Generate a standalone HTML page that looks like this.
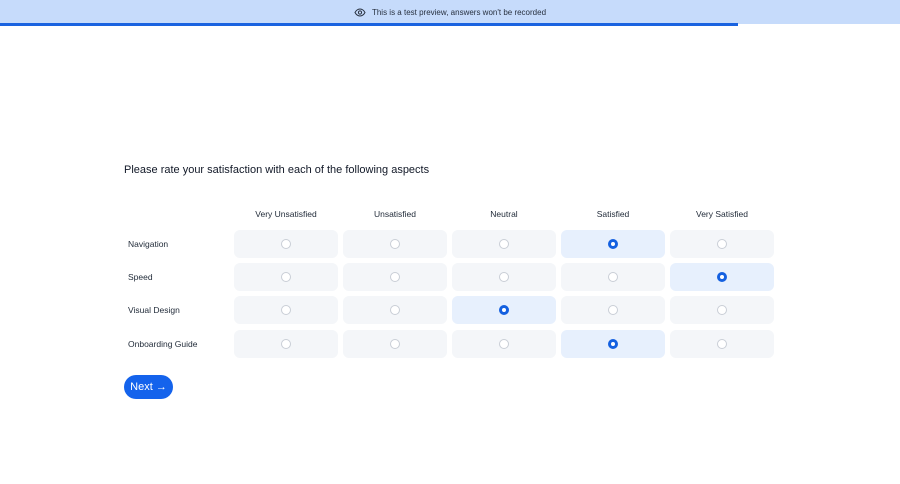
<!DOCTYPE html>
<html><head><style>
*{margin:0;padding:0;box-sizing:border-box}
body{width:900px;height:484px;background:#fff;font-family:"Liberation Sans",sans-serif;color:#1a1f2e;position:relative;overflow:hidden}
.ban{position:absolute;top:0;left:0;width:900px;height:24px;background:#c6dbfb;font-size:8px;color:#27303f;display:flex;align-items:center;justify-content:center;gap:6px}
.bar{position:absolute;top:23px;left:0;width:738px;height:3px;background:#1a63e0}
.q{position:absolute;left:124px;top:164px;font-size:11px;color:#111827}
.h{position:absolute;top:209px;font-size:8.5px;color:#1f2937;width:104px;text-align:center}
.l{position:absolute;left:128px;font-size:8.5px;color:#1f2937}
.c{position:absolute;width:104px;height:28px;background:#f4f6f9;border-radius:6px}
.c.s{background:#e7f0fd}
.r{position:absolute;left:47px;top:9px;width:10px;height:10px;border:1px solid #c9ced6;border-radius:50%;background:#fff}
.s .r{border:3px solid #1460e0;background:#fff}
.btn{position:absolute;left:124px;top:375px;width:49px;height:24px;background:#1463ec;border-radius:12px;color:#fff;font-size:11px;display:flex;align-items:center;justify-content:center}
</style></head><body>
<div class="ban"><svg width="12" height="9" viewBox="0 0 12 9"><path d="M1 4.5C2.5 1.8 4 1 6 1s3.5.8 5 3.5C9.5 7.2 8 8 6 8S2.5 7.2 1 4.5z" fill="none" stroke="#27303f" stroke-width="1"/><circle cx="6" cy="4.5" r="1.6" fill="none" stroke="#27303f" stroke-width="1"/></svg>This is a test preview, answers won't be recorded</div>
<div class="bar"></div>
<div class="q">Please rate your satisfaction with each of the following aspects</div>
<div class="h" style="left:234px">Very Unsatisfied</div>
<div class="h" style="left:343px">Unsatisfied</div>
<div class="h" style="left:452px">Neutral</div>
<div class="h" style="left:561px">Satisfied</div>
<div class="h" style="left:670px">Very Satisfied</div>
<div class="l" style="top:239px">Navigation</div>
<div class="l" style="top:272px">Speed</div>
<div class="l" style="top:305px">Visual Design</div>
<div class="l" style="top:339px">Onboarding Guide</div>
<div id="g"></div>
<script>
var xs=[234,343,452,561,670],ys=[230,263,296,330],sel=[3,4,2,3],h='';
for(var i=0;i<4;i++)for(var j=0;j<5;j++)h+='<div class="c'+(sel[i]==j?' s':'')+'" style="left:'+xs[j]+'px;top:'+ys[i]+'px"><div class="r"></div></div>';
document.getElementById('g').innerHTML=h;
</script>
<div class="btn">Next →</div>
</body></html>
